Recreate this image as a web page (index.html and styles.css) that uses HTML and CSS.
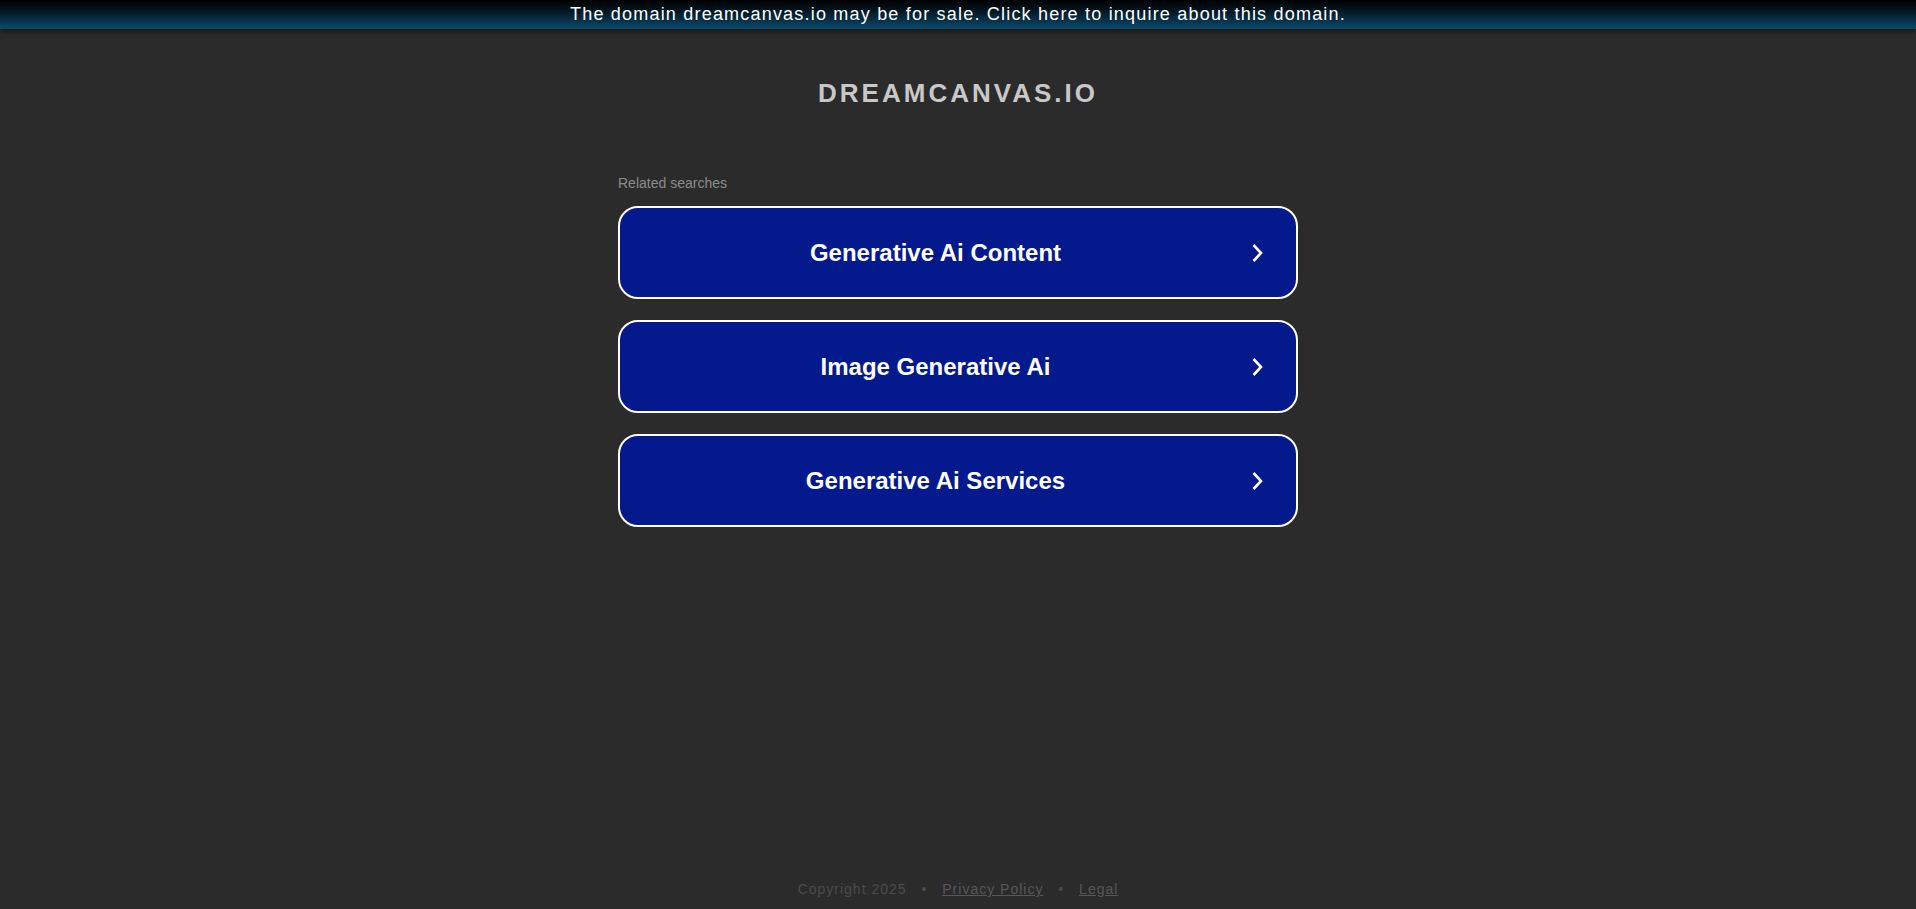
FILE: index.html
```html
<!DOCTYPE html>
<html lang="en">
<head>
    <meta charset="UTF-8">
    <meta name="viewport" content="width=device-width, initial-scale=1.0">
    <title>dreamcanvas.io</title>
    <link rel="stylesheet" href="styles.css">
</head>
<body>
    <a class="sale-bar" href="#">The domain dreamcanvas.io may be for sale. Click here to inquire about this domain.</a>

    <div class="content">
        <h1 class="domain">DREAMCANVAS.IO</h1>

        <div class="searches">
            <p class="searches-label">Related searches</p>
            <a class="search-link" href="#">
                <span class="search-text">Generative Ai Content</span>
                <svg class="chevron" width="12" height="20" viewBox="0 0 12 20"><path d="M2.5 2 L10 10 L2.5 18" /></svg>
            </a>
            <a class="search-link" href="#">
                <span class="search-text">Image Generative Ai</span>
                <svg class="chevron" width="12" height="20" viewBox="0 0 12 20"><path d="M2.5 2 L10 10 L2.5 18" /></svg>
            </a>
            <a class="search-link" href="#">
                <span class="search-text">Generative Ai Services</span>
                <svg class="chevron" width="12" height="20" viewBox="0 0 12 20"><path d="M2.5 2 L10 10 L2.5 18" /></svg>
            </a>
        </div>
    </div>

    <footer class="footer">
        <span>Copyright 2025</span>
        <span class="dot">&bull;</span>
        <a href="#">Privacy Policy</a>
        <span class="dot">&bull;</span>
        <a href="#">Legal</a>
    </footer>
</body>
</html>
```

FILE: styles.css
```css
body {
    margin: 0;
    min-height: 100vh;
    display: flex;
    flex-direction: column;
    background: #2b2b2b;
    font-family: 'Liberation Sans', Arial, sans-serif;
}

.sale-bar {
    display: block;
    height: 29px;
    line-height: 28px;
    text-align: center;
    font-size: 18px;
    letter-spacing: 1.2px;
    color: #fff;
    text-decoration: none;
    background: linear-gradient(to bottom, #000 0%, #02151f 35%, #0b4a6d 100%);
    box-shadow: 0 2px 5px rgba(0, 0, 0, 0.6);
}

.content {
    width: 680px;
    margin: 0 auto;
}

.domain {
    margin: 49px 0 0;
    font-size: 26px;
    line-height: 30px;
    letter-spacing: 3px;
    text-align: center;
    color: #c8c8c8;
}

.searches {
    margin-top: 67px;
}

.searches-label {
    margin: 0 0 15px;
    font-size: 14px;
    line-height: 16px;
    color: #8c8c8c;
}

.search-link {
    display: flex;
    align-items: center;
    box-sizing: border-box;
    height: 93px;
    margin-bottom: 21px;
    padding-right: 33px;
    border: 2px solid #fff;
    border-radius: 20px;
    background: #03198c;
    color: #fff;
    text-decoration: none;
}

.search-text {
    flex: 1;
    text-align: center;
    font-size: 24px;
    font-weight: bold;
}

.chevron {
    fill: none;
    stroke: #fff;
    stroke-width: 2.6;
}

.footer {
    margin-top: auto;
    padding-bottom: 12px;
    text-align: center;
    font-size: 14px;
    line-height: 16px;
    letter-spacing: 1px;
    color: #4c4c4c;
}

.footer a {
    color: #585858;
}

.footer .dot {
    margin: 0 10px;
}
```
